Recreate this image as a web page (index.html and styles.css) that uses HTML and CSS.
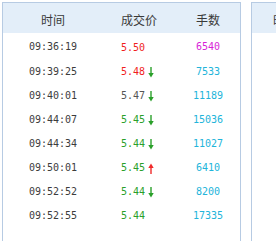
FILE: index.html
```html
<!DOCTYPE html>
<html lang="zh-CN">
<head>
<meta charset="utf-8">
<title>成交明细</title>
<link rel="stylesheet" href="styles.css">
</head>
<body>
<div class="wrap">
  <div class="panel">
    <div class="row head">
      <div class="c1">时间</div>
      <div class="c2">成交价</div>
      <div class="c3">手数</div>
    </div>
    <div class="body">
      <div class="row first">
        <div class="c1 t">09:36:19</div>
        <div class="c2 n red">5.50</div>
        <div class="c3 n mag">6540</div>
      </div>
      <div class="row">
        <div class="c1 t">09:39:25</div>
        <div class="c2 n red">5.48<svg class="ar" viewBox="0 0 6 11"><path d="M3 0V7" stroke="#2aa02a" stroke-width="1.4"/><path d="M0.3 6H5.7L3 10.5Z" fill="#2aa02a"/></svg></div>
        <div class="c3 n cy">7533</div>
      </div>
      <div class="row">
        <div class="c1 t">09:40:01</div>
        <div class="c2 n gr">5.47<svg class="ar" viewBox="0 0 6 11"><path d="M3 0V7" stroke="#2aa02a" stroke-width="1.4"/><path d="M0.3 6H5.7L3 10.5Z" fill="#2aa02a"/></svg></div>
        <div class="c3 n cy">11189</div>
      </div>
      <div class="row">
        <div class="c1 t">09:44:07</div>
        <div class="c2 n grn">5.45<svg class="ar" viewBox="0 0 6 11"><path d="M3 0V7" stroke="#2aa02a" stroke-width="1.4"/><path d="M0.3 6H5.7L3 10.5Z" fill="#2aa02a"/></svg></div>
        <div class="c3 n cy">15036</div>
      </div>
      <div class="row">
        <div class="c1 t">09:44:34</div>
        <div class="c2 n grn">5.44<svg class="ar" viewBox="0 0 6 11"><path d="M3 0V7" stroke="#2aa02a" stroke-width="1.4"/><path d="M0.3 6H5.7L3 10.5Z" fill="#2aa02a"/></svg></div>
        <div class="c3 n cy">11027</div>
      </div>
      <div class="row">
        <div class="c1 t">09:50:01</div>
        <div class="c2 n grn">5.45<svg class="ar" viewBox="0 0 6 11"><path d="M3 11V4" stroke="#f02a2a" stroke-width="1.4"/><path d="M0.3 5H5.7L3 0.5Z" fill="#f02a2a"/></svg></div>
        <div class="c3 n cy">6410</div>
      </div>
      <div class="row">
        <div class="c1 t">09:52:52</div>
        <div class="c2 n grn">5.44<svg class="ar" viewBox="0 0 6 11"><path d="M3 0V7" stroke="#2aa02a" stroke-width="1.4"/><path d="M0.3 6H5.7L3 10.5Z" fill="#2aa02a"/></svg></div>
        <div class="c3 n cy">8200</div>
      </div>
      <div class="row">
        <div class="c1 t">09:52:55</div>
        <div class="c2 n grn">5.44</div>
        <div class="c3 n cy">17335</div>
      </div>
    </div>
  </div>
  <div class="panel panel2">
    <div class="head2">时间</div>
  </div>
</div>
</body>
</html>
```

FILE: styles.css
```css
html, body {
  margin: 0;
  padding: 0;
  background: #fff;
}
.wrap {
  display: flex;
  gap: 10px;
  width: 274px;
  height: 239px;
  overflow: hidden;
  padding: 2px 0 0 2px;
  font-family: "Noto Sans CJK SC", "Noto Sans", sans-serif;
}
.panel {
  width: 237px;
  height: 239px;
  border: 1px solid #b7cbe3;
  border-bottom: none;
  flex: none;
  box-sizing: border-box;
  width: 239px;
}
.panel2 {
  width: 200px;
}
.row {
  display: grid;
  grid-template-columns: 100px 73px 64px;
  height: 24px;
  line-height: 24px;
}
.head {
  background: #e3eef9;
  height: 30px;
  line-height: 34px;
  font-size: 12px;
  color: #3a3a3a;
}
.head2 {
  background: #e3eef9;
  height: 30px;
  line-height: 34px;
  font-size: 12px;
  color: #3a3a3a;
  padding-left: 21px;
}
.body {
  padding-top: 2px;
}
.row.first {
  height: 25px;
}
.c1 { text-align: center; }
.c2 { padding-left: 18px; display: flex; align-items: center; }
.c3 { text-align: center; }
.n, .t {
  font-family: "DejaVu Sans Mono", "Liberation Mono", monospace;
  font-size: 10px;
}
.t { color: #3c3c3c; }
.red { color: #f01e1e; }
.gr { color: #555; }
.grn { color: #2aa02a; }
.mag { color: #d81fd8; }
.cy { color: #22b4da; }
.ar {
  width: 6px;
  height: 11px;
  margin-left: 3px;
}
```
